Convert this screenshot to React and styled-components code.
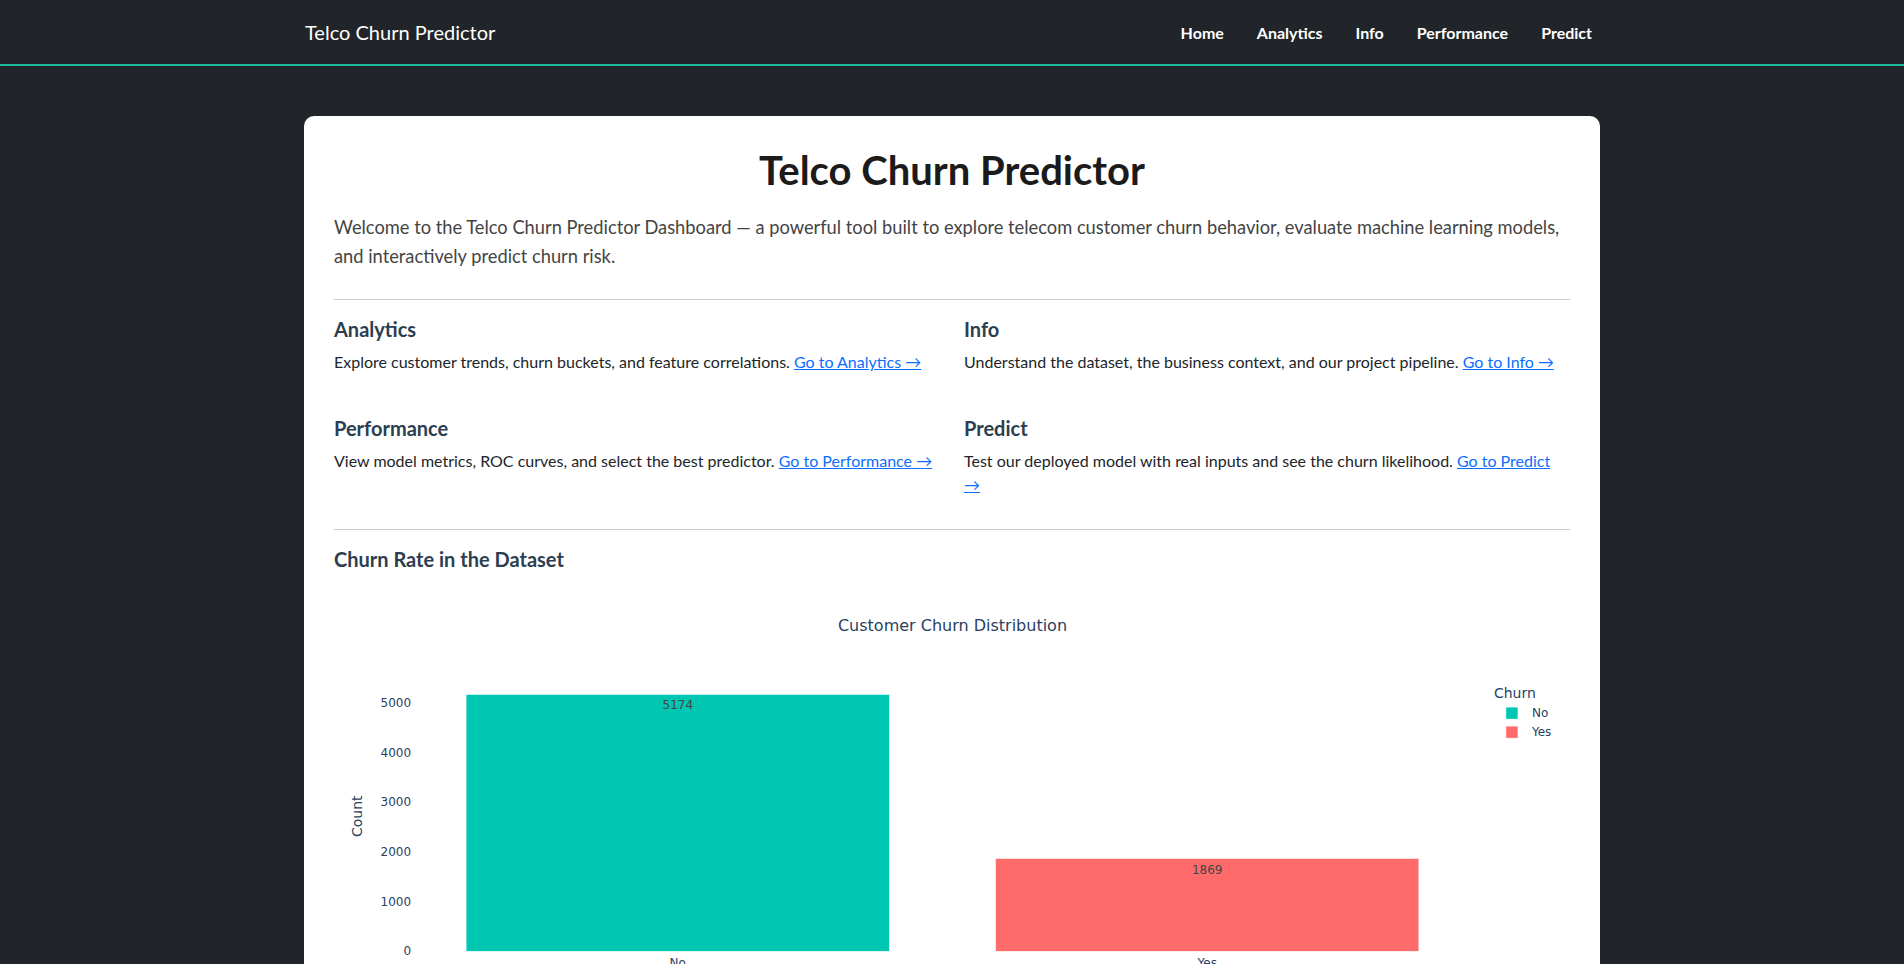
import React from 'react';
import styled, { createGlobalStyle } from 'styled-components';

const GlobalStyle = createGlobalStyle`
  body {
    margin: 0;
    background: #212529;
    font-family: Lato, 'Liberation Sans', sans-serif;
  }
`;

const Nav = styled.nav`
  background: #212529;
  border-bottom: 2px solid #1abc9c;
  height: 64px;
`;

const NavInner = styled.div`
  max-width: 1320px;
  height: 100%;
  margin: 0 auto;
  padding: 0 12px;
  box-sizing: border-box;
  display: flex;
  justify-content: space-between;
  align-items: center;
`;

const Brand = styled.a`
  color: #fff;
  font-size: 20px;
  text-decoration: none;
  padding-left: 1px;
`;

const NavLinks = styled.div`
  display: flex;
  gap: 17px;
`;

const NavLink = styled.a`
  color: #fff;
  font-size: 16px;
  font-weight: 700;
  text-decoration: none;
  padding: 8px;
`;

const Main = styled.main`
  max-width: 1320px;
  margin: 0 auto;
  padding: 50px 12px 40px;
  box-sizing: border-box;
`;

const Card = styled.section`
  background: #fff;
  border-radius: 10px;
  padding: 30px;
`;

const Title = styled.h1`
  margin: 0 0 19px;
  font-size: 40px;
  font-weight: 700;
  line-height: 1.2;
  text-align: center;
  color: #1b1b1b;
`;

const Lead = styled.p`
  margin: 0;
  font-size: 18.3px;
  line-height: 29px;
  color: #444;
`;

const Divider = styled.hr`
  border: 0;
  border-top: 1px solid #ccc;
  margin: ${({ $top }) => $top}px 0 17px;
`;

const Grid = styled.div`
  display: grid;
  grid-template-columns: 1fr 1fr;
  column-gap: 24px;
  row-gap: 26px;
`;

const SectionTitle = styled.h4`
  margin: 0 0 ${({ $mb }) => $mb || 9}px;
  font-size: 20px;
  font-weight: 700;
  line-height: 1.2;
  color: #2c3e50;
`;

const SectionText = styled.p`
  margin: 0 0 16px;
  font-size: 16px;
  line-height: 1.5;
  color: #212529;

  a {
    color: #0d6efd;
    text-decoration: underline;
  }
`;

const ChartSvg = styled.svg`
  display: block;
  width: 100%;
  height: auto;
  font-family: 'DejaVu Sans', Verdana, sans-serif;
`;

const sections = [
  { title: 'Analytics', text: 'Explore customer trends, churn buckets, and feature correlations.', link: 'Go to Analytics →' },
  { title: 'Info', text: 'Understand the dataset, the business context, and our project pipeline.', link: 'Go to Info →' },
  { title: 'Performance', text: 'View model metrics, ROC curves, and select the best predictor.', link: 'Go to Performance →' },
  { title: 'Predict', text: 'Test our deployed model with real inputs and see the churn likelihood.', link: 'Go to Predict →' },
];

const bars = [
  { label: 'No', value: 5174, color: '#00c7b1', x: 132 },
  { label: 'Yes', value: 1869, color: '#ff6b6b', x: 661 },
];

const PLOT_BOTTOM = 370;
const SCALE = 0.0496;

const ChurnChart = () => (
  <ChartSvg viewBox="0 0 1235 450">
    <text x="618" y="50" textAnchor="middle" fontSize="16" fill="#2a3f5f">
      Customer Churn Distribution
    </text>
    {[0, 1000, 2000, 3000, 4000, 5000].map((v) => (
      <text key={v} x="77" y={PLOT_BOTTOM - v * SCALE + 4} textAnchor="end" fontSize="12" fill="#2a3f5f">
        {v}
      </text>
    ))}
    <text x="28" y="235" textAnchor="middle" fontSize="14" fill="#2a3f5f" transform="rotate(-90 28 235)">
      Count
    </text>
    {bars.map((b) => {
      const h = b.value * SCALE;
      return (
        <g key={b.label}>
          <rect x={b.x} y={PLOT_BOTTOM - h} width="423" height={h} fill={b.color} stroke="#fff" strokeWidth="0.5" />
          <text x={b.x + 211.5} y={PLOT_BOTTOM - h + 15} textAnchor="middle" fontSize="12" fill="#444">
            {b.value}
          </text>
          <text x={b.x + 211.5} y={PLOT_BOTTOM + 16} textAnchor="middle" fontSize="12" fill="#2a3f5f">
            {b.label}
          </text>
        </g>
      );
    })}
    <text x="1159" y="117" fontSize="14" fill="#2a3f5f">Churn</text>
    {bars.map((b, i) => (
      <g key={b.label}>
        <rect x="1171" y={126 + i * 19} width="12" height="12" fill={b.color} stroke="#fff" strokeWidth="0.5" />
        <text x="1197" y={136 + i * 19} fontSize="12" fill="#2a3f5f">{b.label}</text>
      </g>
    ))}
  </ChartSvg>
);

const App = () => (
  <>
    <GlobalStyle />
    <Nav>
      <NavInner>
        <Brand href="#">Telco Churn Predictor</Brand>
        <NavLinks>
          <NavLink href="#">Home</NavLink>
          <NavLink href="#">Analytics</NavLink>
          <NavLink href="#">Info</NavLink>
          <NavLink href="#">Performance</NavLink>
          <NavLink href="#">Predict</NavLink>
        </NavLinks>
      </NavInner>
    </Nav>
    <Main>
      <Card>
        <Title>Telco Churn Predictor</Title>
        <Lead>
          Welcome to the Telco Churn Predictor Dashboard — a powerful tool built to explore telecom customer churn
          behavior, evaluate machine learning models, and interactively predict churn risk.
        </Lead>
        <Divider $top={28} />
        <Grid>
          {sections.map((s) => (
            <div key={s.title}>
              <SectionTitle>{s.title}</SectionTitle>
              <SectionText>
                {s.text} <a href="#">{s.link}</a>
              </SectionText>
            </div>
          ))}
        </Grid>
        <Divider $top={16} />
        <SectionTitle $mb={10}>Churn Rate in the Dataset</SectionTitle>
        <ChurnChart />
      </Card>
    </Main>
  </>
);

export default App;
